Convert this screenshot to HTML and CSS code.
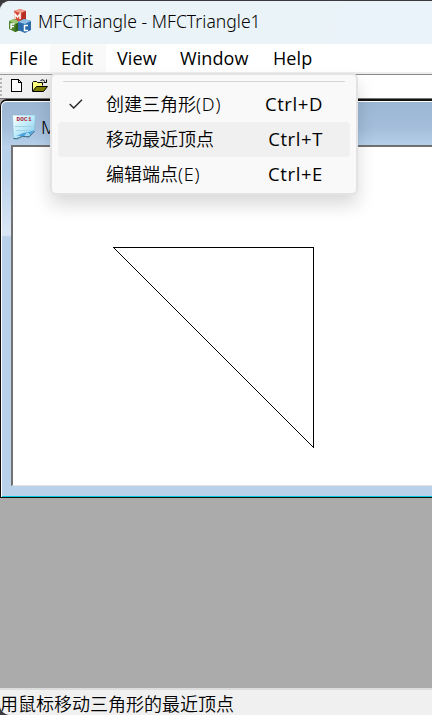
FILE: index.html
```html
<!DOCTYPE html>
<html lang="zh-CN">
<head>
<meta charset="utf-8">
<title>MFCTriangle - MFCTriangle1</title>
<link rel="stylesheet" href="styles.css">
</head>
<body>
<div class="app">
  <header class="titlebar">
    <svg class="app-icon" width="24" height="26" viewBox="0 0 24 26">
      <path d="M6 3l6-2 6 2v9l-6 3-6-3z" fill="#d34a38"/><path d="M6 3l6-2 6 2-6 2z" fill="#f0a090"/><path d="M14 5l4-2v9l-5 3z" fill="#b52f22"/>
      <path d="M1 13l5-2 6 3v8l-5 2-6-3z" fill="#4b8428"/><path d="M1 13l5-2 6 3-5 2z" fill="#9bc774"/><path d="M8 16l4-2v8l-5 2z" fill="#2f6418"/>
      <path d="M10 14l6-3 7 2v9l-6 3-7-3z" fill="#2b6bab"/><path d="M10 14l6-3 7 2-6 3z" fill="#8fc0e6"/>
      <path d="M7 11V6l2.500 3L12 6v5M3 21v-5h3.500M3 18.500h3M20 17.500h-3.500v5H20" fill="none" stroke="#fff" stroke-width="1.500"/>
    </svg>
    <span class="caption">MFCTriangle - MFCTriangle1</span>
  </header>
  <nav class="menubar">
    <span class="item file">File</span><span class="item edit">Edit</span><span class="item view">View</span><span class="item window">Window</span><span class="item help">Help</span>
  </nav>
  <div class="toolbar">
    <div class="tools">
      <i class="grip"></i>
      <svg class="new" width="11" height="13" viewBox="0 0 11 13" shape-rendering="crispEdges"><path d="M.5.5h7l3 3v9H.5zM7.500.5v3h3" fill="#fff" stroke="#000"/></svg>
      <svg class="open" width="16" height="13" viewBox="0 0 16 13"><path d="M.5 12V3.500L1.500 2.500h3l1 1h5v3" fill="#ffff80" stroke="#000"/><path d="M.5 12.500l4-5h11l-4 5z" fill="#808000" stroke="#000"/><path d="M8.500 1.500Q11-.5 13 2.500M14.500.5v3h-3" fill="none" stroke="#000"/></svg>
    </div>
  </div>
  <main class="workspace">
    <section class="child">
      <div class="child-title">
        <svg width="24" height="26" viewBox="0 0 24 26"><defs><linearGradient id="paper" x2="1" y2="1"><stop stop-color="#fff"/><stop offset=".4" stop-color="#c9f0fb"/><stop offset="1" stop-color="#7fc7ee"/></linearGradient></defs><path d="M.5 1h23L22.500 17l-5 6q-3-1-6 0t-5 2-5-1z" fill="url(#paper)" stroke="#82b8d3" stroke-width=".6"/><path d="M2 23q4-2 7-1t5-2 4 1l4-5-5 2-6 1z" fill="#4ea6df"/><path d="M1.500 24.500q3 1 6-1t6-1 4 0l5-5.500" fill="none" stroke="#35617c"/><path d="M3 12.500h18M4 16.500h15" stroke="#a2d1e2"/><text class="doc" x="4.500" y="7" textLength="15">DOC1</text></svg>
        <span>M</span>
      </div>
      <div class="canvas">
        <svg width="419" height="338" viewBox="13 147 419 338" shape-rendering="crispEdges"><path d="M113.500 247.500h200v200z" fill="none" stroke="#000"/></svg>
      </div>
    </section>
  </main>
  <footer class="statusbar">用鼠标移动三角形的最近顶点</footer>
</div>
<div class="popup">
  <div class="separator"></div>
  <div class="row"><svg class="check" width="14" height="10" viewBox="0 0 14 10"><path d="M.7 5l4 4L13 .8" fill="none" stroke="#222" stroke-width="1.300"/></svg><span class="name">创建三角形<span class="mnemonic">(D)</span></span><span class="key">Ctrl+D</span></div>
  <div class="row active"><span class="name">移动最近顶点</span><span class="key">Ctrl+T</span></div>
  <div class="row"><span class="name">编辑端点<span class="mnemonic">(E)</span></span><span class="key">Ctrl+E</span></div>
</div>
</body>
</html>
```
FILE: styles.css
```css
* { box-sizing: border-box; }
body {
  margin: 0;
  width: 432px;
  height: 715px;
  overflow: hidden;
  background: #3b3a3e;
  font-family: "Noto Sans", "Noto Sans CJK SC", sans-serif;
  font-size: 18px;
  font-weight: 350;
  color: #000;
}
svg { display: block; flex: none; }
.app {
  height: 715px;
  display: flex;
  flex-direction: column;
  border-top: 1px solid #3b3a3e;
  border-radius: 10px 0 0 10px;
  overflow: hidden;
  background: #fff;
}
.titlebar {
  height: 43px;
  display: flex;
  flex: none;
  align-items: center;
  padding: 0 0 3px 8px;
  background: linear-gradient(100deg, #eaf3f7 76%, #eaf2fa 78%);
}
.app-icon { margin-top: -1px; }
.caption { margin-left: 6px; white-space: nowrap; font-size: 17.500px; letter-spacing: .04px; }
.menubar { height: 28px; display: flex; flex: none; line-height: 28px; font: 400 18px/28px "Open Sans", sans-serif; letter-spacing: .1px; }
.item { white-space: nowrap; }
.file { width: 50px; padding-left: 9px; }
.edit { width: 56px; padding-left: 11px; background: #f9f9f9; }
.view { width: 63px; padding-left: 11px; }
.window { width: 93px; padding-left: 11px; }
.help { padding-left: 11px; }
.toolbar { height: 26px; flex: none; border-top: 2px solid #eee; background: linear-gradient(#888 1px, #fff 1px); }
.tools { width: 52px; height: 24px; display: flex; align-items: flex-start; padding-top: 4px; background: #f0f0f0; border-top: 1px solid #999; }
.grip { width: 2px; height: 18px; margin-top: -1px; background: repeating-linear-gradient(#b5b5b5 0 2px, #f0f0f0 2px 4px); }
.new { margin-left: 9px; }
.open { margin-left: 10px; }
.workspace { height: 590px; flex: none; background: #ababab; border-top: 1px solid #777; }
.child {
  height: 399px;
  border: solid #111;
  border-width: 2px 0 1px 1px;
  border-radius: 7px 0 0 0;
  padding-left: 10px;
  background: linear-gradient(#b9d1ea 70px, #dbe7f6 134px, #b9d1ea 136px);
  box-shadow: inset 1px 1px #fff, inset 0 -1px #00c8df;
}
.child-title {
  height: 44px;
  margin: 0 0 0 -9px;
  padding: 7px 0 0 10px;
  display: flex;
  align-items: center;
  gap: 5px;
  border-top: 1px solid #fff;
  border-top-left-radius: 5px;
  background: linear-gradient(#9cb7d4, #a3bddb 60%, #b6cfe9);
}
.doc { font: bold 6px "Liberation Mono", monospace; fill: #a51c35; }
.canvas { height: 341px; border: solid #717171; border-width: 2px 0 1px 2px; border-bottom-color: #e3e3e3; background: #fff; }
.statusbar { height: 27px; flex: none; border-top: 2px solid #ddd; background: #f0f0f0; line-height: 28px; white-space: nowrap; }
.popup {
  position: absolute;
  left: 50px;
  top: 73px;
  width: 308px;
  height: 122px;
  padding: 7px 6px 0;
  background: #f9f9f9;
  border: 2px solid #e3e3e3;
  border-radius: 6px;
  box-shadow: 0 10px 18px rgba(0, 0, 0, .15);
}
.separator { height: 1px; margin: -1px 5px 5px; background: #d5d5d5; }
.row { position: relative; display: flex; justify-content: space-between; height: 35px; padding: 0 27px 0 48px; line-height: 35px; border-radius: 4px; white-space: nowrap; }
.mnemonic { letter-spacing: .8px; }
.key { font: 400 18.500px/34px "Open Sans", sans-serif; letter-spacing: .6px; }
.active { background: #f0f0f0; }
.check { position: absolute; left: 11px; top: 12px; }
```
